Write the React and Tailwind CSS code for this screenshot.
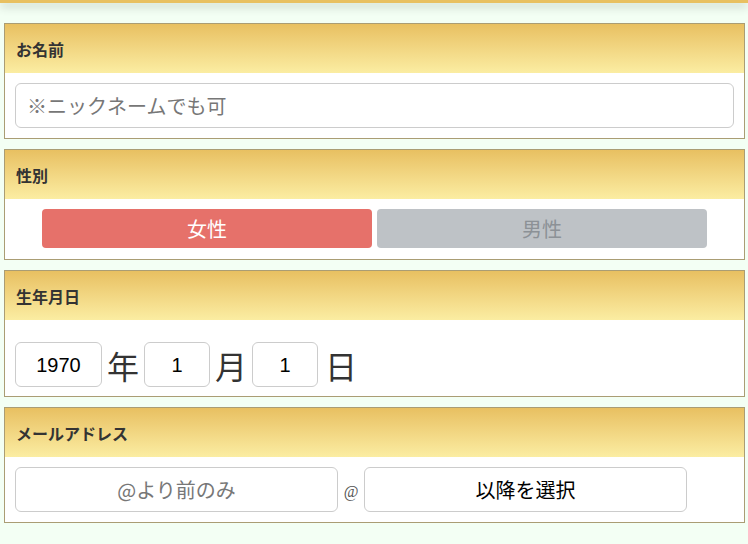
const jp = { fontFamily: '"Noto Sans CJK JP", "Noto Sans", sans-serif' }
const arial = { fontFamily: '"Liberation Sans", Arial, sans-serif' }

// ── Section with golden header ─────────────────────────────────────────────
function Section({ title, children, bodyClass = '' }) {
  return (
    <div className="border border-[#aa9d74] bg-white">
      <div className="h-[49px] flex items-center px-[11px] bg-gradient-to-b from-[#e8c061] to-[#fbeda2]">
        <span className="text-[16px] font-bold text-[#333]" style={jp}>{title}</span>
      </div>
      <div className={bodyClass}>{children}</div>
    </div>
  )
}

export default function App() {
  const inputCls = 'h-[45px] border border-[#cccccc] rounded-[6px] bg-white'

  return (
    <div className="w-[748px] h-[544px] bg-[#f3fff4] overflow-hidden" style={jp}>
      <div className="h-[3px] bg-[#e8c061] shadow-[0_3px_10px_rgba(0,0,0,0.3)]" />

      <div className="flex flex-col gap-[10px] pl-[4px] pr-[3px] pt-[20px]">
        <Section title="お名前" bodyClass="p-[10px]">
          <div className={`${inputCls} flex items-center px-[11px]`}>
            <span className="text-[20px] text-[#777]">※ニックネームでも可</span>
          </div>
        </Section>

        <Section title="性別" bodyClass="flex justify-center gap-[5px] pt-[10px] pb-[11px]">
          <div className="w-[330px] h-[39px] rounded-[4px] bg-[#e6716a] flex items-center justify-center text-[20px] text-white">女性</div>
          <div className="w-[330px] h-[39px] rounded-[4px] bg-[#bec2c6] flex items-center justify-center text-[20px] text-[#8c9196]">男性</div>
        </Section>

        <Section title="生年月日" bodyClass="flex items-center pl-[10px] pt-[22px] pb-[9px]">
          <div className={`${inputCls} w-[87px] flex items-center justify-center text-[20px] text-black`} style={arial}>1970</div>
          <span className="text-[32px] text-[#333] ml-[5px] mr-[5px] leading-none">年</span>
          <div className={`${inputCls} w-[66px] flex items-center justify-center text-[20px] text-black`} style={arial}>1</div>
          <span className="text-[32px] text-[#333] ml-[5px] mr-[5px] leading-none">月</span>
          <div className={`${inputCls} w-[66px] flex items-center justify-center text-[20px] text-black`} style={arial}>1</div>
          <span className="text-[32px] text-[#333] ml-[7px] leading-none">日</span>
        </Section>

        <Section title="メールアドレス" bodyClass="flex items-center pl-[10px] pt-[10px] pb-[10px]">
          <div className={`${inputCls} w-[323px] flex items-center justify-center text-[20px] text-[#777]`}>@より前のみ</div>
          <span className="w-[26px] text-center text-[16px] text-[#555] pt-[4px]" style={{ fontFamily: '"Liberation Serif", serif' }}>@</span>
          <div className={`${inputCls} w-[323px] flex items-center justify-center text-[20px] text-black`}>以降を選択</div>
        </Section>
      </div>
    </div>
  )
}
